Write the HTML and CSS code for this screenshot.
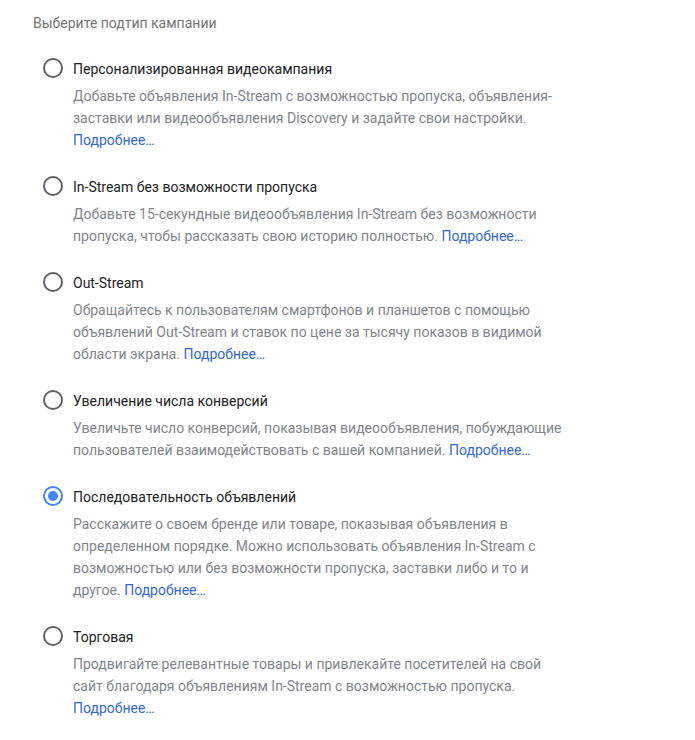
FILE: index.html
```html
<!DOCTYPE html>
<html lang="ru">
<head>
<meta charset="utf-8">
<link rel="stylesheet" href="styles.css">
</head>
<body>
<div class="page">
  <div class="header">Выберите подтип кампании</div>
  <div class="options">
    <div class="option">
      <span class="radio"></span>
      <div class="body">
        <div class="title">Персонализированная видеокампания</div>
        <p class="desc"><span>Добавьте объявления In-Stream с возможностью пропуска, объявления-заставки или видеообъявления Discovery и задайте свои настройки.</span> <a class="more">Подробнее…</a></p>
      </div>
    </div>
    <div class="option">
      <span class="radio"></span>
      <div class="body">
        <div class="title">In-Stream без возможности пропуска</div>
        <p class="desc"><span>Добавьте 15-секундные видеообъявления In-Stream без возможности пропуска, чтобы рассказать свою историю полностью.</span> <a class="more">Подробнее…</a></p>
      </div>
    </div>
    <div class="option">
      <span class="radio"></span>
      <div class="body">
        <div class="title">Out-Stream</div>
        <p class="desc"><span>Обращайтесь к пользователям смартфонов и планшетов с помощью объявлений Out-Stream и ставок по цене за тысячу показов в видимой области экрана.</span> <a class="more">Подробнее…</a></p>
      </div>
    </div>
    <div class="option">
      <span class="radio"></span>
      <div class="body">
        <div class="title">Увеличение числа конверсий</div>
        <p class="desc"><span>Увеличьте число конверсий, показывая видеообъявления, побуждающие пользователей взаимодействовать с вашей компанией.</span> <a class="more">Подробнее…</a></p>
      </div>
    </div>
    <div class="option">
      <span class="radio checked"></span>
      <div class="body">
        <div class="title">Последовательность объявлений</div>
        <p class="desc"><span>Расскажите о своем бренде или товаре, показывая объявления в определенном порядке. Можно использовать объявления In-Stream с возможностью или без возможности пропуска, заставки либо и то и другое.</span> <a class="more">Подробнее…</a></p>
      </div>
    </div>
    <div class="option">
      <span class="radio"></span>
      <div class="body">
        <div class="title">Торговая</div>
        <p class="desc"><span>Продвигайте релевантные товары и привлекайте посетителей на свой сайт благодаря объявлениям In-Stream с возможностью пропуска.</span> <a class="more">Подробнее…</a></p>
      </div>
    </div>
  </div>
</div>
</body>
</html>
```
FILE: styles.css
```css
html, body {
  margin: 0;
  padding: 0;
  background: #ffffff;
}
body {
  font-family: Roboto, "Noto Sans", Arial, sans-serif;
  font-size: 14px;
  line-height: 22px;
}
.page {
  padding: 12px 0 0 33px;
}
.header {
  color: #757575;
  font-size: 14px;
  line-height: 22px;
}
.options {
  display: flex;
  flex-direction: column;
  gap: 25px;
  margin-top: 24px;
}
.option {
  display: flex;
  align-items: flex-start;
}
.radio {
  flex: none;
  box-sizing: border-box;
  width: 20px;
  height: 20px;
  border: 2px solid #5f6368;
  border-radius: 50%;
  margin: 0 0 0 10px;
  position: relative;
}
.radio.checked {
  border-color: #4285f4;
}
.radio.checked::after {
  content: "";
  position: absolute;
  left: 3px;
  top: 3px;
  width: 10px;
  height: 10px;
  border-radius: 50%;
  background: #4285f4;
}
.body {
  margin-left: 10px;
  width: 500px;
}
.title {
  color: #202124;
  margin-bottom: 5px;
}
.desc {
  margin: 0;
  color: #80868b;
}
.more {
  color: #3367d6;
  text-decoration: none;
}
```
